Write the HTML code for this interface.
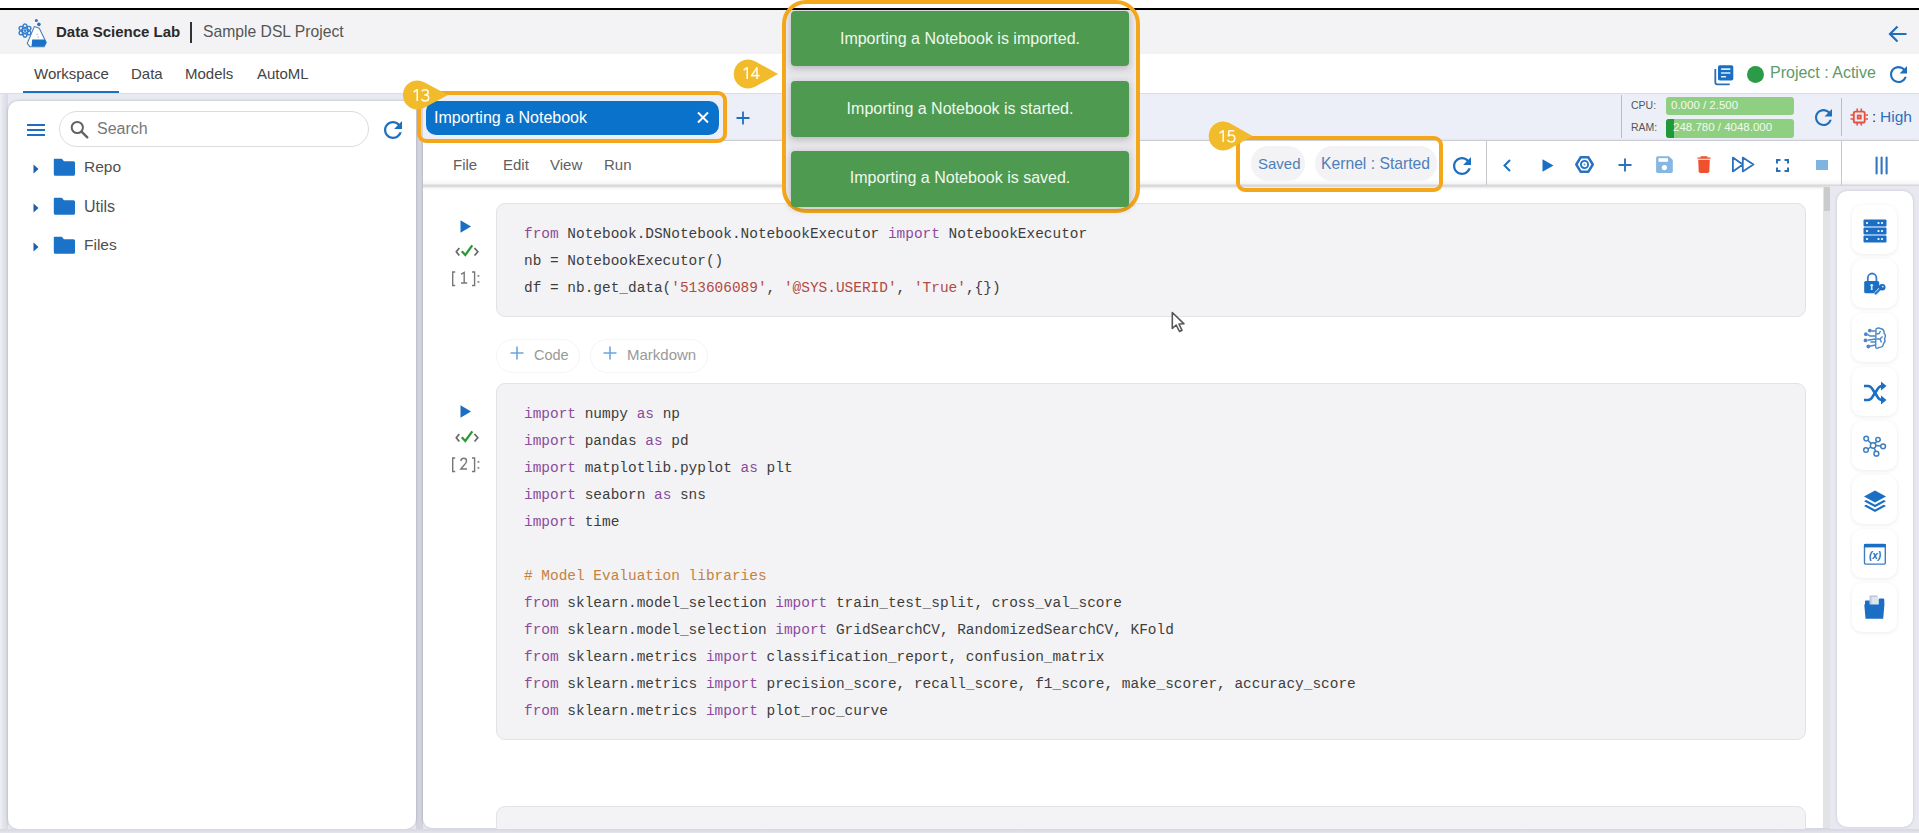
<!DOCTYPE html>
<html><head><meta charset="utf-8">
<style>
*{box-sizing:border-box;margin:0;padding:0}
html,body{width:1919px;height:833px;overflow:hidden;background:#e8eaf1;font-family:"Liberation Sans",sans-serif;position:relative}
.a{position:absolute}
.t{position:absolute;white-space:pre;line-height:1}
svg{position:absolute;overflow:visible}
.code{position:absolute;font-family:"Liberation Mono",monospace;font-size:14.45px;line-height:27px;color:#3d3d3d;white-space:pre}
.kw{color:#8b4a9e}
.st{color:#b24a44}
.cm{color:#c5813d}
</style></head><body>
<!-- top white + black line -->
<div class="a" style="left:0;top:0;width:1919px;height:8px;background:#fff"></div>
<div class="a" style="left:0;top:8px;width:1919px;height:2px;background:#000"></div>
<!-- header -->
<div class="a" style="left:0;top:10px;width:1919px;height:44px;background:#f3f3f5"></div>
<!-- nav -->
<div class="a" style="left:0;top:54px;width:1919px;height:39px;background:#fff"></div>
<div class="a" style="left:23px;top:91px;width:96px;height:2px;background:#1f6fbf"></div>

<span class="t" style="left:56px;top:24px;font-size:15px;font-weight:bold;color:#2b2b2b">Data Science Lab</span>
<div class="a" style="left:190px;top:22px;width:2px;height:21px;background:#333"></div>
<span class="t" style="left:203px;top:24px;font-size:15.7px;color:#555">Sample DSL Project</span>

<span class="t" style="left:34px;top:66px;font-size:15px;color:#444">Workspace</span>
<span class="t" style="left:131px;top:66px;font-size:15px;color:#444">Data</span>
<span class="t" style="left:185px;top:66px;font-size:15px;color:#444">Models</span>
<span class="t" style="left:257px;top:66px;font-size:15px;color:#444">AutoML</span>

<div class="a" style="left:416px;top:101px;width:7px;height:732px;background:#d3d4dd"></div>
<div class="a" style="left:0;top:94px;width:8px;height:739px;background:linear-gradient(90deg,#eef1f6,#e3e4ec 40%,#d8d9e2)"></div>
<!-- left panel -->
<div class="a" style="left:8px;top:101px;width:408px;height:727.5px;background:#fff;border-radius:10px;box-shadow:0 0 3px rgba(40,40,80,.28)"></div>

<!-- tab band -->
<div class="a" style="left:423px;top:93px;width:1496px;height:48px;background:#edeff8"></div>
<div class="a" style="left:0;top:93px;width:1919px;height:1px;background:#dcdde3"></div>
<div class="a" style="left:423px;top:140px;width:1496px;height:1px;background:#dedfe4"></div>
<!-- main panel -->
<div class="a" style="left:423px;top:141px;width:1496px;height:687px;background:#fff;border-radius:0 0 0 9px;box-shadow:0 0 3px rgba(40,40,80,.28)"></div>
<div class="a" style="left:423px;top:179px;width:1496px;height:12px;background:linear-gradient(#fff 0,#f7f7f8 4px,#f4f4f5 5px,#d8d8db 6px,#d6d6d9 7px,#ececef 8.5px,#fbfbfc 10px,#fff 12px)"></div>


<!-- cells -->
<div class="a" style="left:496px;top:202.5px;width:1310px;height:114.5px;background:#f3f3f5;border:1px solid #e3e3e7;border-radius:9px"></div>
<svg style="left:460px;top:219.5px" width="12" height="13" viewBox="0 0 12 13"><path d="M0.5 0.3 L11 6.5 L0.5 12.7Z" fill="#1a6fc4"/></svg>
<svg style="left:455px;top:244px" width="25" height="13" viewBox="0 0 25 13"><path d="M4.3 4 L1.3 7.8 L4.3 11.5 M19.5 4 L22.8 7.8 L19.5 11.5" fill="none" stroke="#666" stroke-width="1.7"/><path d="M6.8 7.2 L10.3 11 L17.3 1.3" fill="none" stroke="#2b9a35" stroke-width="2.3"/></svg>
<svg style="left:451px;top:271px" width="30" height="16" viewBox="0 0 30 16"><path d="M4.2 1 H1.7 V14.5 H4.2 M21 1 H23.6 V14.5 H21" fill="none" stroke="#777" stroke-width="1.4"/><path d="M10 3.3 L13.2 1.5 V12 M10 12 H16.2" fill="none" stroke="#777" stroke-width="1.4"/><rect x="26.5" y="4" width="1.8" height="1.8" fill="#888"/><rect x="26.5" y="10" width="1.8" height="1.8" fill="#888"/></svg>
<div class="code" style="left:524px;top:220.8px"><span class="kw">from</span> Notebook.DSNotebook.NotebookExecutor <span class="kw">import</span> NotebookExecutor
nb = NotebookExecutor()
df = nb.get_data(<span class="st">'513606089'</span>, <span class="st">'@SYS.USERID'</span>, <span class="st">'True'</span>,{})</div>

<div class="a" style="left:496px;top:338.5px;width:84px;height:34px;border:1px solid #f5f5f7;border-radius:17px"></div>
<svg style="left:510px;top:346px" width="14" height="14" viewBox="0 0 14 14"><path d="M7 0.5 V13.5 M0.5 7 H13.5" stroke="#6aa6dc" stroke-width="1.6"/></svg>
<span class="t" style="left:534px;top:347.7px;font-size:14.5px;color:#999">Code</span>
<div class="a" style="left:590px;top:338.5px;width:118px;height:34px;border:1px solid #f5f5f7;border-radius:17px"></div>
<svg style="left:602.5px;top:346px" width="14" height="14" viewBox="0 0 14 14"><path d="M7 0.5 V13.5 M0.5 7 H13.5" stroke="#6aa6dc" stroke-width="1.6"/></svg>
<span class="t" style="left:627px;top:347.3px;font-size:15px;color:#999">Markdown</span>

<div class="a" style="left:496px;top:383px;width:1310px;height:357px;background:#f3f3f5;border:1px solid #e3e3e7;border-radius:9px"></div>
<svg style="left:460px;top:405px" width="12" height="13" viewBox="0 0 12 13"><path d="M0.5 0.3 L11 6.5 L0.5 12.7Z" fill="#1a6fc4"/></svg>
<svg style="left:455px;top:430px" width="25" height="13" viewBox="0 0 25 13"><path d="M4.3 4 L1.3 7.8 L4.3 11.5 M19.5 4 L22.8 7.8 L19.5 11.5" fill="none" stroke="#666" stroke-width="1.7"/><path d="M6.8 7.2 L10.3 11 L17.3 1.3" fill="none" stroke="#2b9a35" stroke-width="2.3"/></svg>
<svg style="left:451px;top:457px" width="30" height="16" viewBox="0 0 30 16"><path d="M4.2 1 H1.7 V14.5 H4.2 M21 1 H23.6 V14.5 H21" fill="none" stroke="#777" stroke-width="1.4"/><path d="M9.8 4 Q10.3 1.3 12.8 1.3 Q15.5 1.3 15.5 4 Q15.5 6 13 8.3 L9.8 12 H16" fill="none" stroke="#777" stroke-width="1.4"/><rect x="26.5" y="4" width="1.8" height="1.8" fill="#888"/><rect x="26.5" y="10" width="1.8" height="1.8" fill="#888"/></svg>
<div class="code" style="left:524px;top:400.8px"><span class="kw">import</span> numpy <span class="kw">as</span> np
<span class="kw">import</span> pandas <span class="kw">as</span> pd
<span class="kw">import</span> matplotlib.pyplot <span class="kw">as</span> plt
<span class="kw">import</span> seaborn <span class="kw">as</span> sns
<span class="kw">import</span> time

<span class="cm"># Model Evaluation libraries</span>
<span class="kw">from</span> sklearn.model_selection <span class="kw">import</span> train_test_split, cross_val_score
<span class="kw">from</span> sklearn.model_selection <span class="kw">import</span> GridSearchCV, RandomizedSearchCV, KFold
<span class="kw">from</span> sklearn.metrics <span class="kw">import</span> classification_report, confusion_matrix
<span class="kw">from</span> sklearn.metrics <span class="kw">import</span> precision_score, recall_score, f1_score, make_scorer, accuracy_score
<span class="kw">from</span> sklearn.metrics <span class="kw">import</span> plot_roc_curve</div>

<div class="a" style="left:496px;top:806px;width:1310px;height:60px;background:#f3f3f5;border:1px solid #e3e3e7;border-radius:9px"></div>

<!-- scrollbar + right strip -->
<div class="a" style="left:1823px;top:186px;width:7px;height:642px;background:#e3e3e5"></div>
<div class="a" style="left:1823.5px;top:187px;width:6px;height:24px;background:#cbcbcd"></div>
<div class="a" style="left:1830px;top:186px;width:89px;height:647px;background:#e8e9f0"></div>
<div class="a" style="left:1837px;top:191px;width:76px;height:636px;background:#fff;border-radius:10px;box-shadow:0 0 3px rgba(40,40,80,.22)"></div>


<!-- logo -->
<svg style="left:14px;top:14px" width="38" height="38" viewBox="14 14 38 38">
 <g fill="none" stroke="#3580cc" stroke-width="1.5">
  <ellipse cx="25" cy="30.6" rx="2.6" ry="6.6"/>
  <ellipse cx="25" cy="30.6" rx="2.6" ry="6.6" transform="rotate(60 25 30.6)"/>
  <ellipse cx="25" cy="30.6" rx="2.6" ry="6.6" transform="rotate(-60 25 30.6)"/>
 </g>
 <circle cx="25" cy="30.6" r="1.4" fill="#3580cc"/>
 <circle cx="36.4" cy="20.4" r="1.5" fill="#2f6fb5"/>
 <circle cx="38.9" cy="24.4" r="1.8" fill="#2f6fb5"/>
 <path d="M34.3 26.6 L39.3 28.2 L46.2 42.5 L44 46.8 L30 46.8 L27.3 43.3 Z" fill="#fff" stroke="#4a7fb5" stroke-width="1.1" stroke-linejoin="round"/>
 <path d="M32.2 39.6 L45 39.6 L46.3 42.6 L44.3 46.6 L31.5 46.6 Z" fill="#1a73c8"/>
 <path d="M36.5 34.3 H38 M37.5 37 H39" stroke="#7aa8d8" stroke-width=".8"/>
</svg>

<!-- back arrow -->
<svg style="left:1888px;top:24px" width="20" height="20" viewBox="0 0 20 20"><path d="M18.5 10 H2.5 M9.5 2.5 L2 10 L9.5 17.5" fill="none" stroke="#1f6fbf" stroke-width="2.2"/></svg>

<!-- doc icon -->
<svg style="left:1714px;top:65px" width="20" height="20" viewBox="0 0 20 20">
 <rect x="4" y="0.3" width="15.3" height="15.2" rx="1.8" fill="#1a6fc4"/>
 <rect x="6.8" y="3.3" width="9.8" height="1.6" rx=".8" fill="#d8f0ff"/>
 <rect x="6.8" y="7.2" width="9.8" height="1.6" rx=".8" fill="#d8f0ff"/>
 <rect x="6.8" y="11" width="5.5" height="1.6" rx=".8" fill="#d8f0ff"/>
 <path d="M1.3 4 V17.3 Q1.3 19.3 3.3 19.3 H15.7" fill="none" stroke="#2a70b8" stroke-width="1.8"/>
</svg>
<div class="a" style="left:1747px;top:65.5px;width:17px;height:17px;border-radius:50%;background:#2b9b47"></div>
<span class="t" style="left:1770px;top:65px;font-size:16px;color:#5e9a6a">Project : Active</span>
<svg style="left:1890px;top:66px" width="17" height="17" viewBox="4 4 16 16"><path d="M17.65 6.35C16.2 4.9 14.21 4 12 4c-4.42 0-7.99 3.58-7.99 8s3.57 8 7.99 8c3.73 0 6.84-2.55 7.73-6h-2.08c-.82 2.33-3.04 4-5.65 4-3.31 0-6-2.69-6-6s2.69-6 6-6c1.66 0 3.14.69 4.22 1.78L13 11h7V4l-2.35 2.35z" fill="#1f6fbf"/></svg>

<!-- left panel content -->
<svg style="left:27px;top:123px" width="19" height="14" viewBox="0 0 19 14"><g fill="#1f6fbf"><rect x="0" y="1" width="18" height="2"/><rect x="0" y="6" width="18" height="2"/><rect x="0" y="11" width="18" height="2"/></g></svg>
<div class="a" style="left:59px;top:111px;width:310px;height:36px;border:1px solid #dcdcdc;border-radius:18px"></div>
<svg style="left:70px;top:120px" width="19" height="19" viewBox="0 0 19 19"><circle cx="7.3" cy="7.5" r="5.6" fill="none" stroke="#5f6368" stroke-width="2"/><path d="M11.5 11.7 L17.3 17.3" stroke="#5f6368" stroke-width="2.4" stroke-linecap="round"/></svg>
<span class="t" style="left:97px;top:121px;font-size:16px;color:#777">Search</span>
<svg style="left:384px;top:121px" width="18" height="18" viewBox="4 4 16 16"><path d="M17.65 6.35C16.2 4.9 14.21 4 12 4c-4.42 0-7.99 3.58-7.99 8s3.57 8 7.99 8c3.73 0 6.84-2.55 7.73-6h-2.08c-.82 2.33-3.04 4-5.65 4-3.31 0-6-2.69-6-6s2.69-6 6-6c1.66 0 3.14.69 4.22 1.78L13 11h7V4l-2.35 2.35z" fill="#1f6fbf"/></svg>

<svg style="left:33px;top:164px" width="6" height="10" viewBox="0 0 6 10"><path d="M0.5 0.5 L5.5 5 L0.5 9.5Z" fill="#1f5ea8"/></svg>
<svg style="left:53px;top:158px" width="23" height="18" viewBox="0 0 23 18"><path d="M1.5 0.8 H8.8 L11 3.2 H20.5 Q22 3.2 22 4.7 V16.2 Q22 17.7 20.5 17.7 H2.3 Q0.8 17.7 0.8 16.2 V1.8 Q0.8 0.8 1.5 0.8Z" fill="#1a73c8"/></svg>
<span class="t" style="left:84px;top:159px;font-size:15.5px;color:#505050">Repo</span>
<svg style="left:33px;top:203px" width="6" height="10" viewBox="0 0 6 10"><path d="M0.5 0.5 L5.5 5 L0.5 9.5Z" fill="#1f5ea8"/></svg>
<svg style="left:53px;top:197px" width="23" height="18" viewBox="0 0 23 18"><path d="M1.5 0.8 H8.8 L11 3.2 H20.5 Q22 3.2 22 4.7 V16.2 Q22 17.7 20.5 17.7 H2.3 Q0.8 17.7 0.8 16.2 V1.8 Q0.8 0.8 1.5 0.8Z" fill="#1a73c8"/></svg>
<span class="t" style="left:84px;top:198.5px;font-size:16px;color:#505050">Utils</span>
<svg style="left:33px;top:242px" width="6" height="10" viewBox="0 0 6 10"><path d="M0.5 0.5 L5.5 5 L0.5 9.5Z" fill="#1f5ea8"/></svg>
<svg style="left:53px;top:236px" width="23" height="18" viewBox="0 0 23 18"><path d="M1.5 0.8 H8.8 L11 3.2 H20.5 Q22 3.2 22 4.7 V16.2 Q22 17.7 20.5 17.7 H2.3 Q0.8 17.7 0.8 16.2 V1.8 Q0.8 0.8 1.5 0.8Z" fill="#1a73c8"/></svg>
<span class="t" style="left:84px;top:236.8px;font-size:15.5px;color:#505050">Files</span>


<!-- tab -->
<div class="a" style="left:426px;top:101px;width:293px;height:34px;background:#0b72cb;border-radius:10px"></div>
<span class="t" style="left:434px;top:110px;font-size:16px;color:#fff">Importing a Notebook</span>
<svg style="left:697px;top:112px" width="12" height="11" viewBox="0 0 12 11"><path d="M1 0.5 L11 10.5 M11 0.5 L1 10.5" stroke="#fff" stroke-width="2"/></svg>
<svg style="left:736px;top:111px" width="14" height="14" viewBox="0 0 14 14"><path d="M7 0.5 V13.5 M0.5 7 H13.5" stroke="#1f6fbf" stroke-width="1.8"/></svg>

<!-- menu -->
<span class="t" style="left:453px;top:157.3px;font-size:15px;color:#606060">File</span>
<span class="t" style="left:503px;top:157.3px;font-size:15px;color:#606060">Edit</span>
<span class="t" style="left:550px;top:157.3px;font-size:15px;color:#606060">View</span>
<span class="t" style="left:604px;top:157.3px;font-size:15px;color:#606060">Run</span>

<!-- cpu ram -->
<div class="a" style="left:1621px;top:95px;width:1px;height:43px;background:#b9bcc4"></div>
<span class="t" style="left:1631px;top:99.5px;font-size:10.5px;color:#555">CPU:</span>
<span class="t" style="left:1631px;top:121.5px;font-size:10.5px;color:#555">RAM:</span>
<div class="a" style="left:1666px;top:96.5px;width:128px;height:18px;background:#8fcf82;border-radius:3px"></div>
<div class="a" style="left:1666px;top:119px;width:128px;height:18.5px;background:#8fcf82;border-radius:3px"></div>
<div class="a" style="left:1666px;top:119px;width:8px;height:18.5px;background:#1f9a3a;border-radius:3px 0 0 3px"></div>
<span class="t" style="left:1671px;top:100px;font-size:11.5px;color:#f2faf0">0.000 / 2.500</span>
<span class="t" style="left:1673px;top:122px;font-size:11.5px;color:#f2faf0">248.780 / 4048.000</span>
<svg style="left:1815px;top:109px" width="17" height="17" viewBox="4 4 16 16"><path d="M17.65 6.35C16.2 4.9 14.21 4 12 4c-4.42 0-7.99 3.58-7.99 8s3.57 8 7.99 8c3.73 0 6.84-2.55 7.73-6h-2.08c-.82 2.33-3.04 4-5.65 4-3.31 0-6-2.69-6-6s2.69-6 6-6c1.66 0 3.14.69 4.22 1.78L13 11h7V4l-2.35 2.35z" fill="#1f6fbf"/></svg>
<div class="a" style="left:1841px;top:98px;width:1px;height:38px;background:#b9bcc4"></div>
<svg style="left:1845px;top:102px" width="30" height="30" viewBox="1845 102 30 30">
 <rect x="1853.8" y="111.6" width="10.9" height="10.9" rx="1.6" fill="none" stroke="#e5533f" stroke-width="1.9"/>
 <rect x="1856.8" y="114.6" width="4.9" height="4.9" fill="#e5533f"/>
 <rect x="1858.5" y="116.3" width="1.5" height="1.5" fill="#f39a8c"/>
 <g stroke="#e5533f" stroke-width="1.6"><path d="M1857.2 108.5V111M1861.3 108.5V111M1857.2 123V125.5M1861.3 123V125.5M1850.5 115H1853M1850.5 119H1853M1865.5 115H1868M1865.5 119H1868"/></g>
</svg>
<span class="t" style="left:1872px;top:108.5px;font-size:15px;color:#333">:</span>
<span class="t" style="left:1880px;top:108.5px;font-size:15.5px;color:#2d6fbd">High</span>

<!-- toolbar right -->
<div class="a" style="left:1251px;top:146px;width:54px;height:35px;background:#f3f3f6;border-radius:17px"></div>
<div class="a" style="left:1315px;top:146px;width:122px;height:35px;background:#f3f3f6;border-radius:17px"></div>
<span class="t" style="left:1258px;top:155.5px;font-size:15px;color:#4d7fb9">Saved</span>
<span class="t" style="left:1321px;top:155.5px;font-size:15.7px;color:#4d7fb9">Kernel : Started</span>
<svg style="left:1453px;top:157px" width="18" height="18" viewBox="4 4 16 16"><path d="M17.65 6.35C16.2 4.9 14.21 4 12 4c-4.42 0-7.99 3.58-7.99 8s3.57 8 7.99 8c3.73 0 6.84-2.55 7.73-6h-2.08c-.82 2.33-3.04 4-5.65 4-3.31 0-6-2.69-6-6s2.69-6 6-6c1.66 0 3.14.69 4.22 1.78L13 11h7V4l-2.35 2.35z" fill="#1f6fbf"/></svg>
<div class="a" style="left:1486px;top:141px;width:1px;height:44px;background:#c5c7cc"></div>
<svg style="left:1502px;top:159px" width="10" height="13" viewBox="0 0 10 13"><path d="M8 1 L2.5 6.5 L8 12" fill="none" stroke="#1f6fbf" stroke-width="2"/></svg>
<svg style="left:1542px;top:158.5px" width="12" height="13" viewBox="0 0 12 13"><path d="M0.5 0.3 L11.5 6.5 L0.5 12.7Z" fill="#1a6fc4"/></svg>
<svg style="left:1575px;top:156px" width="20" height="17" viewBox="0 0 20 17"><path d="M5.6 1.3 H13.4 L17.8 8.5 L13.4 15.7 H5.6 L1.3 8.5Z" fill="none" stroke="#2a72bd" stroke-width="2.5" stroke-linejoin="round"/><circle cx="9.5" cy="8.5" r="3.6" fill="none" stroke="#2a72bd" stroke-width="1.9"/><circle cx="9.5" cy="8.5" r="1" fill="#5a9ad8"/></svg>
<svg style="left:1618px;top:158px" width="14" height="14" viewBox="0 0 14 14"><path d="M7 0.6 V13.4 M0.5 7 H13.5" stroke="#2a72bd" stroke-width="1.9"/></svg>
<svg style="left:1656px;top:156.4px" width="17" height="17" viewBox="0 0 17 17"><path d="M1.8 0.3 H13 L16.8 4 V15.2 Q16.8 16.9 15.1 16.9 H1.8 Q0.1 16.9 0.1 15.2 V2 Q0.1 0.3 1.8 0.3Z" fill="#86b6e2"/><rect x="2.5" y="2.2" width="9.5" height="3.6" fill="#fff"/><circle cx="8.4" cy="11.6" r="2.6" fill="#fff"/></svg>
<svg style="left:1697px;top:156.4px" width="14" height="17" viewBox="0 0 14 17"><path d="M4.5 0.3 H9.5 Q10.5 0.3 10.7 1.4 H13.6 V2.8 H0.4 V1.4 H3.3 Q3.5 0.3 4.5 0.3Z" fill="#f0502e"/><path d="M1.2 3.7 H12.8 L12.3 15.3 Q12.2 16.9 10.6 16.9 H3.4 Q1.8 16.9 1.7 15.3Z" fill="#f0502e"/></svg>
<svg style="left:1731px;top:156px" width="24" height="17" viewBox="0 0 24 17"><path d="M1.9 1.6 L11.8 8.5 L1.9 15.4Z M11.8 1.6 L22.4 8.5 L11.8 15.4Z" fill="none" stroke="#2a72bd" stroke-width="1.8" stroke-linejoin="round"/></svg>
<svg style="left:1776px;top:158.5px" width="13" height="13" viewBox="0 0 13 13"><path d="M1 4.5 V1 H4.5 M8.5 1 H12 V4.5 M12 8.5 V12 H8.5 M4.5 12 H1 V8.5" fill="none" stroke="#2a70b8" stroke-width="2"/></svg>
<div class="a" style="left:1816px;top:159.6px;width:11.8px;height:10.8px;background:#7fb4e2"></div>
<div class="a" style="left:1841px;top:141px;width:1px;height:44px;background:#c5c7cc"></div>
<svg style="left:1875px;top:156.7px" width="14" height="17" viewBox="0 0 14 17"><path d="M1.6 0.5 V16.5 M6.6 0.5 V16.5 M11.6 0.5 V16.5" stroke="#3277bf" stroke-width="2.1" stroke-linecap="round"/></svg>

<!-- bottom strip -->
<div class="a" style="left:0;top:828.5px;width:1919px;height:5px;background:linear-gradient(#d6d7e0,#e6e7ef)"></div>

<!-- right sidebar icons -->
<div class="a" style="left:1852px;top:205px;width:45px;height:49px;background:#fff;border-radius:10px;box-shadow:0 1px 4px rgba(0,0,0,.08)"></div>
<div class="a" style="left:1852px;top:259px;width:45px;height:49px;background:#fff;border-radius:10px;box-shadow:0 1px 4px rgba(0,0,0,.08)"></div>
<div class="a" style="left:1852px;top:313px;width:45px;height:49px;background:#fff;border-radius:10px;box-shadow:0 1px 4px rgba(0,0,0,.08)"></div>
<div class="a" style="left:1852px;top:367px;width:45px;height:49px;background:#fff;border-radius:10px;box-shadow:0 1px 4px rgba(0,0,0,.08)"></div>
<div class="a" style="left:1852px;top:421px;width:45px;height:49px;background:#fff;border-radius:10px;box-shadow:0 1px 4px rgba(0,0,0,.08)"></div>
<div class="a" style="left:1852px;top:475px;width:45px;height:49px;background:#fff;border-radius:10px;box-shadow:0 1px 4px rgba(0,0,0,.08)"></div>
<div class="a" style="left:1852px;top:529px;width:45px;height:49px;background:#fff;border-radius:10px;box-shadow:0 1px 4px rgba(0,0,0,.08)"></div>
<div class="a" style="left:1852px;top:583px;width:45px;height:49px;background:#fff;border-radius:10px;box-shadow:0 1px 4px rgba(0,0,0,.08)"></div>
<!-- server -->
<svg style="left:1863px;top:219px" width="24" height="24" viewBox="0 0 24 24"><g fill="#1a6fc4"><rect x="0.5" y="0.5" width="23" height="7" rx="1"/><rect x="0.5" y="8.5" width="23" height="7" rx="1"/><rect x="0.5" y="16.5" width="23" height="7" rx="1"/></g><g fill="#fff"><circle cx="4" cy="4" r="1.1"/><circle cx="4" cy="12" r="1.1"/><circle cx="4" cy="20" r="1.1"/><circle cx="15.5" cy="4" r="1.1"/><circle cx="19" cy="4" r="1.1"/><circle cx="15.5" cy="12" r="1.1"/><circle cx="19" cy="12" r="1.1"/><circle cx="15.5" cy="20" r="1.1"/><circle cx="19" cy="20" r="1.1"/></g></svg>
<!-- lock key -->
<svg style="left:1858px;top:268px" width="34" height="34" viewBox="1858 268 34 34"><path d="M1867.8 281 V277.8 A4.3 4.3 0 0 1 1876.4 277.8 V281" fill="none" stroke="#3b7cc0" stroke-width="1.8"/><rect x="1864.2" y="281" width="15" height="12.2" rx="1.5" fill="#1a6fc4"/><circle cx="1871.7" cy="285.3" r="1.4" fill="#cfe8ff"/><path d="M1871.1 285.5 H1872.3 L1872.7 290 H1870.7Z" fill="#cfe8ff"/><path d="M1880.5 288.8 L1875.6 293.6" stroke="#fff" stroke-width="3.4"/><path d="M1880.5 288.8 L1875.6 293.6" stroke="#2a7cd0" stroke-width="2.2" stroke-linecap="round"/><circle cx="1882.2" cy="287.2" r="3.3" fill="#1a6fc4"/><circle cx="1882.8" cy="286.6" r=".9" fill="#cfe8ff"/></svg>
<!-- brain -->
<svg style="left:1858px;top:322px" width="34" height="34" viewBox="1858 322 34 34"><g fill="none" stroke="#4a88c8" stroke-width="1.4"><path d="M1876 329 Q1878.5 327 1881 328.8 Q1884.5 329.5 1884 333 Q1886.5 335.5 1884.5 338.5 Q1886 341.5 1883.5 343.5 Q1883 347.5 1879 347.5 Q1876.5 349.5 1875.7 347 Z"/><path d="M1876.3 334 L1879 333.5 L1880.5 331 M1876.3 339 L1880 339 L1882.5 336.5 M1880 339 L1881.5 342.5"/><path d="M1875.7 331 L1871.5 331 M1875.7 336 L1870 336 L1867.5 334.3 M1875.7 339 L1867.5 340.3 M1875.7 342 L1870.5 342 M1875.7 345 L1869.5 346.3"/></g><g fill="#4a88c8"><circle cx="1869.8" cy="330.6" r="1.9"/><circle cx="1865.9" cy="334.2" r="1.9"/><circle cx="1865.5" cy="340.4" r="1.9"/><circle cx="1868.3" cy="346.5" r="1.9"/></g></svg>
<!-- shuffle -->
<svg style="left:1863px;top:381px" width="24" height="24" viewBox="0 0 24 24"><g fill="none" stroke="#1a6fc4" stroke-width="2.6"><path d="M1 5 H5 Q8 5 10 9 L14 15 Q16 19 19 19 H20"/><path d="M1 19 H5 Q8 19 10 15 L14 9 Q16 5 19 5 H20"/></g><g fill="#1a6fc4"><path d="M18 0.5 L23.5 5 L18 9.5Z"/><path d="M18 14.5 L23.5 19 L18 23.5Z"/></g></svg>
<!-- network -->
<svg style="left:1858px;top:430px" width="34" height="34" viewBox="1858 430 34 34"><g fill="none" stroke="#3d7fc0" stroke-width="1.5"><circle cx="1873.1" cy="445.5" r="2.7"/><circle cx="1866.2" cy="438.6" r="2.3"/><circle cx="1878" cy="439.6" r="2.2"/><circle cx="1883.1" cy="446.3" r="2.4"/><circle cx="1876.4" cy="453.7" r="2.4"/><circle cx="1866" cy="450" r="2.3"/><path d="M1867.9 440.3 L1871.2 443.6 M1876.8 441.5 L1874.8 443.5 M1880.7 446 L1875.8 445.6 M1875.6 451.4 L1874.2 448 M1868.1 449 L1870.6 447"/></g></svg>
<!-- layers -->
<svg style="left:1863px;top:489px" width="24" height="24" viewBox="0 0 24 24"><g fill="#1a6fc4"><path d="M12 1.5 L23 7.5 L12 13.5 L1 7.5Z"/><path d="M3.2 11 L12 15.8 L20.8 11 L23 12.3 L12 18.3 L1 12.3Z"/><path d="M3.2 15.7 L12 20.5 L20.8 15.7 L23 17 L12 23 L1 17Z"/></g></svg>
<!-- window fx -->
<svg style="left:1858px;top:537px" width="34" height="34" viewBox="1858 537 34 34"><rect x="1864.5" y="544.5" width="20.8" height="19.6" rx="1" fill="none" stroke="#3d7fc0" stroke-width="1.4"/><rect x="1864" y="544" width="21.8" height="3.4" fill="#1a6fc4"/><text x="1875" y="558.5" font-family="Liberation Sans" font-size="10" font-style="italic" font-weight="bold" fill="#2a6fb8" text-anchor="middle">(x)</text></svg>
<!-- folder files -->
<svg style="left:1858px;top:590px" width="34" height="34" viewBox="1858 590 34 34"><path d="M1865 601.5 Q1865 600.5 1866 600.5 H1869.5 L1870.5 601.5 H1877 V605 H1865Z" fill="#1a6fc4"/><path d="M1878.5 600 Q1878.5 598.6 1880 598.6 H1883 Q1884.3 598.6 1884.3 600 V605 H1878.5Z" fill="#1a6fc4"/><rect x="1869.5" y="595.5" width="8" height="9.5" fill="#b8c8da"/><rect x="1871.5" y="597" width="7" height="8.5" fill="#dde5ee"/><path d="M1864.3 604.6 H1884.4 L1883.2 618.8 H1865.5Z" fill="#1a6fc4"/></svg>
<!-- cursor -->
<svg style="left:1170px;top:311px" width="18" height="22" viewBox="0 0 18 22"><path d="M2.3 1.5 L2.3 17.5 L6.2 14 L9.5 20.5 L12 19.3 L9 13 L14 12.8Z" fill="#fff" stroke="#555" stroke-width="1.6" stroke-linejoin="round"/></svg>

<!-- toasts frame -->
<div class="a" style="left:786px;top:10px;width:350px;height:197px;background:linear-gradient(90deg,#ececf0,#e6e6ea 5px,#e6e6ea 345px,#ececf0)"></div>
<div class="a" style="left:782px;top:-0.3px;width:358px;height:213px;border:4px solid #f4a71a;border-radius:24px"></div>
<div class="a" style="left:791px;top:10.5px;width:338px;height:55.5px;background:#4e9a51;border-radius:4px;box-shadow:0 2px 7px rgba(0,0,0,.22)"></div>
<div class="a" style="left:791px;top:80.5px;width:338px;height:56px;background:#4e9a51;border-radius:4px;box-shadow:0 2px 7px rgba(0,0,0,.22)"></div>
<div class="a" style="left:791px;top:150.5px;width:338px;height:56px;background:#4e9a51;border-radius:4px;box-shadow:0 2px 7px rgba(0,0,0,.22)"></div>
<div class="t" style="left:791px;top:30.8px;width:338px;text-align:center;font-size:16px;color:#eef9ee">Importing a Notebook is imported.</div>
<div class="t" style="left:791px;top:101.2px;width:338px;text-align:center;font-size:16px;color:#eef9ee">Importing a Notebook is started.</div>
<div class="t" style="left:791px;top:170.3px;width:338px;text-align:center;font-size:16px;color:#eef9ee">Importing a Notebook is saved.</div>

<!-- frame 13 -->
<div class="a" style="left:417px;top:91px;width:310px;height:52px;border:4px solid #f4a71a;border-radius:9px"></div>
<!-- frame 15 -->
<div class="a" style="left:1236px;top:136px;width:207px;height:56px;border:4px solid #f4a71a;border-radius:9px"></div>

<!-- badges -->
<svg style="left:402px;top:80px" width="48" height="30" viewBox="0 0 48 30"><path d="M46 15 L22.2 2.2 A14.5 14.5 0 1 0 22.2 27.8Z" fill="#f1bb2b"/></svg>
<svg style="left:413px;top:88.6px" width="18" height="13" viewBox="0 0 18 13"><g fill="none" stroke="#fffbe8" stroke-width="1.55" stroke-linejoin="round"><path d="M0.6 3 L4.2 0.7 V12"/><path transform="translate(8 0)" d="M0.8 2.4 Q1.8 0.7 4.2 0.7 Q7.2 0.7 7.2 3.3 Q7.2 5.9 4 5.9 H3.2 M4 5.9 Q7.7 5.9 7.7 8.8 Q7.7 11.9 4.1 11.9 Q1.4 11.9 0.4 9.8"/></g></svg>
<svg style="left:733px;top:58.5px" width="48" height="30" viewBox="0 0 48 30"><path d="M45 15 L22 2.2 A14.5 14.5 0 1 0 22 27.8Z" fill="#f1bb2b"/></svg>
<svg style="left:743px;top:66.8px" width="18" height="13" viewBox="0 0 18 13"><g fill="none" stroke="#fffbe8" stroke-width="1.55" stroke-linejoin="round"><path d="M0.6 3 L4.2 0.7 V12"/><path transform="translate(8 0)" d="M6 12 V0.7 L0.5 8.6 H8.6"/></g></svg>
<svg style="left:1208px;top:121.2px" width="48" height="30" viewBox="0 0 48 30"><path d="M44.5 15 L22 2.2 A14.5 14.5 0 1 0 22 27.8Z" fill="#f1bb2b"/></svg>
<svg style="left:1218.5px;top:129.8px" width="18" height="13" viewBox="0 0 18 13"><g fill="none" stroke="#fffbe8" stroke-width="1.55" stroke-linejoin="round"><path d="M0.6 3 L4.2 0.7 V12"/><path transform="translate(8 0)" d="M7.2 0.7 H2 L1.4 5.9 Q2.6 5 4.3 5 Q7.8 5 7.8 8.4 Q7.8 11.9 4.2 11.9 Q1.5 11.9 0.4 9.9"/></g></svg>

<!--END-->
<div class="a" style="left:0;top:828.5px;width:1919px;height:5px;background:linear-gradient(#d6d7e0,#e6e7ef)"></div>

</body></html>
